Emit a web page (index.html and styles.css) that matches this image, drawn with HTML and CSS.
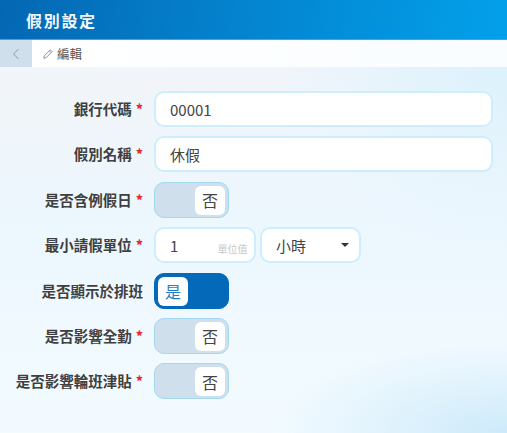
FILE: index.html
```html
<!DOCTYPE html>
<html lang="zh-Hant">
<head>
    <meta charset="UTF-8">
    <meta name="viewport" content="width=device-width, initial-scale=1.0">
    <title>假別設定</title>
    <link rel="stylesheet" href="styles.css">
</head>
<body>
    <header class="top-bar">
        <h1>假別設定</h1>
    </header>
    <nav class="tool-bar">
        <a class="back-btn" href="#">
            <svg width="10" height="14" viewBox="0 0 10 14"><path d="M7.5 2 2.500 7l5 5" fill="none" stroke="#8b99a4" stroke-width="1"/></svg>
        </a>
        <span class="tool-title">
            <svg width="10" height="10" viewBox="0 0 10 10"><path d="M.8 9.200l.6-2.400L7.400.8l1.800 1.800-6 6zM6.400 1.800l1.800 1.800" fill="none" stroke="#888" stroke-width=".9"/></svg>
            編輯
        </span>
    </nav>
    <main class="form">
        <div class="row">
            <label>銀行代碼<i>*</i></label>
            <div class="input wide">00001</div>
        </div>
        <div class="row">
            <label>假別名稱<i>*</i></label>
            <div class="input wide">休假</div>
        </div>
        <div class="row">
            <label>是否含例假日<i>*</i></label>
            <div class="switch"><span class="knob">否</span></div>
        </div>
        <div class="row">
            <label>最小請假單位<i>*</i></label>
            <div class="input unit">1<small>單位值</small></div>
            <div class="input select">小時<b class="caret"></b></div>
        </div>
        <div class="row">
            <label>是否顯示於排班</label>
            <div class="switch on"><span class="knob">是</span></div>
        </div>
        <div class="row">
            <label>是否影響全勤<i>*</i></label>
            <div class="switch"><span class="knob">否</span></div>
        </div>
        <div class="row">
            <label>是否影響輪班津貼<i>*</i></label>
            <div class="switch"><span class="knob">否</span></div>
        </div>
    </main>
</body>
</html>
```
FILE: styles.css
```css
html, body {
    height: 100%;
}

body {
    margin: 0;
    display: flex;
    flex-direction: column;
    overflow: hidden;
    font-family: "Noto Sans CJK TC", "Noto Sans", sans-serif;
    color: #3c3c3c;
    background: #fff;
}

.top-bar {
    height: 39px;
    flex: none;
    display: flex;
    align-items: center;
    padding-left: 26px;
    background: linear-gradient(100deg, #0567b3 0%, #0485d0 50%, #03a0ea 100%);
    border-bottom: 1px solid #29aef0;
}

.top-bar h1 {
    margin: 0;
    font-size: 16px;
    font-weight: 700;
    letter-spacing: 1.7px;
    color: #f2f8fc;
}

.tool-bar {
    height: 27px;
    flex: none;
    display: flex;
    align-items: center;
    background: linear-gradient(90deg, #fff, #f9fdff);
    font-size: 12.5px;
    color: #555;
}

.back-btn {
    width: 32px;
    height: 100%;
    display: flex;
    align-items: center;
    justify-content: center;
    background: #cfe0ec;
}

.tool-title {
    display: flex;
    align-items: center;
    gap: 4px;
    margin-left: 11px;
}

.form {
    flex: 1;
    display: flex;
    flex-direction: column;
    gap: 9.4px;
    padding: 24px 14px 0 0;
    background:
        radial-gradient(ellipse 240px 90px at 100% 100%, #cdeafa 0%, rgba(205, 234, 250, 0) 100%),
        radial-gradient(ellipse 240px 180px at 100% 0%, #dcf2fd 0%, rgba(220, 242, 253, 0) 100%),
        linear-gradient(180deg, #f2f5f9 0%, #ecf7fe 45%, #f3fbff 100%);
}

.row {
    display: flex;
    align-items: center;
    height: 36px;
}

.row label {
    width: 143px;
    flex: none;
    margin-right: 11px;
    padding-bottom: 1px;
    text-align: right;
    font-size: 14.5px;
    font-weight: 700;
    color: #3f3f3f;
    white-space: nowrap;
}

.row label i {
    margin-left: 4px;
    font-style: normal;
    color: #e8262c;
}

.input {
    height: 36px;
    box-sizing: border-box;
    display: flex;
    align-items: center;
    padding-left: 14px;
    background: #fff;
    border: 2px solid #cdeefe;
    border-radius: 10px;
    font-size: 15px;
    color: #444;
}

.wide {
    flex: 1;
}

.unit {
    width: 101.5px;
    margin-right: 4.5px;
    justify-content: space-between;
    padding-right: 6px;
}

.unit small {
    margin-top: 6px;
    font-size: 10px;
    color: #c8c8c8;
}

.select {
    width: 101px;
    justify-content: space-between;
    padding-right: 10px;
}

.caret {
    border-top: 4px solid #333;
    border-left: 4px solid transparent;
    border-right: 4px solid transparent;
}

.switch {
    width: 75px;
    height: 36px;
    box-sizing: border-box;
    display: flex;
    justify-content: flex-end;
    padding: 3px;
    background: #cfe0ec;
    border: 1px solid #a3d8f4;
    border-radius: 10px;
}

.switch .knob {
    width: 30px;
    height: 29px;
    display: flex;
    align-items: center;
    justify-content: center;
    background: #fff;
    border-radius: 6px;
    font-size: 16px;
    color: #444;
}

.switch.on {
    justify-content: flex-start;
    background: #0369b8;
    border-color: #0369b8;
}

.switch.on .knob {
    color: #1f7cc8;
}
```
